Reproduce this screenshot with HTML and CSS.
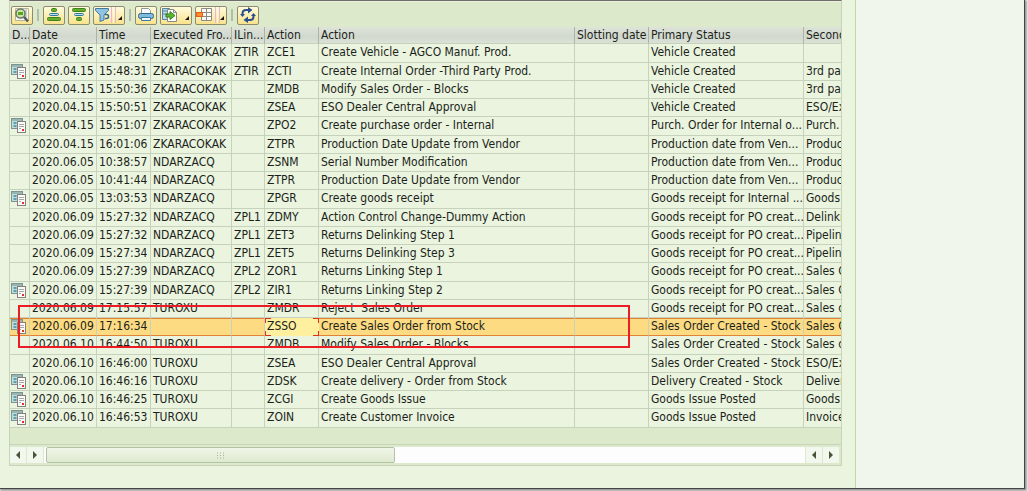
FILE: index.html
```html
<!DOCTYPE html>
<html lang="en">
<head>
<meta charset="utf-8">
<title>Vehicle action history</title>
<link rel="stylesheet" href="styles.css">
</head>
<body>
<svg class="defs" aria-hidden="true">
  <symbol id="doc" viewBox="0 0 16 15">
    <rect x=".5" y=".5" width="11" height="10" fill="#c3dcd6" stroke="#7d9490"/>
    <path d="M1 2h10" stroke="#6e8f8f"/>
    <path d="M2.500 4h3v2h-3zM2.500 7h3v2h-3z" fill="#5aa0b4"/>
    <rect x="6.500" y="3.500" width="8" height="11" fill="#fafafa" stroke="#85807c"/>
    <path d="M8 6.500h5M8 8.500h5M8 10.500h2" stroke="#a7a7a7"/>
    <path d="M11 11h2v2h-2z" fill="#e5301f"/>
  </symbol>
</svg>
<div class="window">
  <main class="main">
    <section class="grid">
      <div class="toolbar" role="toolbar" aria-label="Table functions">
        <button class="tool" type="button" aria-label="Details"><svg width="20" height="16" viewBox="0 0 20 16"><path d="M3.500 1.500h13v12h-13z" fill="#f7f8ef" stroke="#b4b5a0"/><path d="M14 2v11" stroke="#aaa"/><circle cx="8.500" cy="6.500" r="4.500" fill="#c9e8a4" stroke="#6b766c" stroke-width="1.500"/><path d="M6 6.500h5" stroke="#56a51c" stroke-width="3"/><path d="M12 10l4 4.500" stroke="#555c58" stroke-width="2.500"/></svg></button>
        <span class="sep"></span>
        <button class="tool" type="button" aria-label="Sort ascending"><svg width="16" height="16" viewBox="0 0 16 16"><rect x="5.500" y="1.500" width="5" height="3" rx="1" fill="#65ad2c" stroke="#3e821f"/><rect x="3.500" y="6.500" width="9" height="2" rx="1" fill="#b8dff0" stroke="#30759d"/><rect x="1.500" y="10.500" width="13" height="3" rx="1" fill="#65ad2c" stroke="#3e821f"/></svg></button>
        <button class="tool" type="button" aria-label="Sort descending"><svg width="16" height="16" viewBox="0 0 16 16"><rect x="1.500" y="1.500" width="13" height="3" rx="1" fill="#65ad2c" stroke="#3e821f"/><rect x="3.500" y="6.500" width="9" height="2" rx="1" fill="#b8dff0" stroke="#30759d"/><rect x="5.500" y="10.500" width="5" height="3" rx="1" fill="#65ad2c" stroke="#3e821f"/></svg></button>
        <button class="tool split" type="button" aria-label="Filter"><svg width="30" height="16" viewBox="0 0 30 16"><path d="M1.500 1.500h13v2L10 8v5l-4 1.500V8L1.500 3.500z" fill="#8fc3df" stroke="#407ca2"/><path d="M11 7.500h1.500a2 2 0 0 1 0 4H11" fill="none" stroke="#2f6797" stroke-width="1.500"/><path d="M17.500 0v16M21.500 0v16" stroke="#e6b6d8"/><path d="M19.500 0v16" stroke="#fff8dc"/><path d="M28 9v4h-4z" fill="#171717"/></svg></button>
        <span class="sep"></span>
        <button class="tool" type="button" aria-label="Print"><svg width="18" height="16" viewBox="0 0 18 16"><path d="M4.500 6V1.500h7l2 2V6" fill="#fff" stroke="#8b98a0"/><rect x="1.500" y="6.500" width="15" height="5" rx="2" fill="#81bbdc" stroke="#286995"/><path d="M4.500 10.500h9v3h-9z" fill="#eefaff" stroke="#387aa5"/></svg></button>
        <button class="tool split" type="button" aria-label="Export"><svg width="30" height="16" viewBox="0 0 30 16"><path d="M1.500 1.500h7v11h-7z" fill="#badae6" stroke="#52869c"/><path d="M2 4h6M2 7h4" stroke="#4685a1"/><path d="M6.500 2.500h6l3 3v9h-9z" fill="#fff" stroke="#878787"/><path d="M12.500 2.500v3h3" fill="none" stroke="#878787"/><path d="M5 7h4V4.500l5 4-5 4V10H5z" fill="#5bb62c" stroke="#397f22"/><path d="M28 9v4h-4z" fill="#171717"/></svg></button>
        <button class="tool split" type="button" aria-label="Choose layout"><svg width="30" height="16" viewBox="0 0 30 16"><path d="M5.500 1.500h10v12h-10zM5.500 5.500h10M5.500 9.500h10M10.500 1.500v12" fill="#faf9f2" stroke="#8b8a84"/><rect x=".5" y="5.500" width="6" height="4" fill="#ff8b2c" stroke="#de5f16"/><path d="M19.500 0v16M23.500 0v16" stroke="#e6b6d8"/><path d="M21.500 0v16" stroke="#fff8dc"/><path d="M28 9v4h-4z" fill="#171717"/></svg></button>
        <span class="sep"></span>
        <button class="tool" type="button" aria-label="Refresh"><svg width="18" height="16" viewBox="0 0 18 16"><path d="M3.500 8V6.500Q3.500 3 7 3H10M14.500 8v1.500Q14.500 13 11 13H8" fill="none" stroke="#294f8c" stroke-width="2"/><path d="M9 0l4.500 3L9 6.500zM9 9.500L4.500 13 9 16zM1 7h5l-2.500 3zM12 9h5l-2.500-3z" fill="#294f8c"/></svg></button>
      </div>
      <div class="scroller">
        <table>
          <colgroup><col class="c-doc"><col class="c-date"><col class="c-time"><col class="c-exec"><col class="c-link"><col class="c-act"><col class="c-text"><col class="c-slot"><col class="c-stat"><col class="c-sec"></colgroup>
          <thead><tr><th>D...</th><th>Date</th><th>Time</th><th>Executed Fro...</th><th>ILin...</th><th>Action</th><th>Action</th><th>Slotting date</th><th>Primary Status</th><th>Second</th></tr></thead>
          <tbody>
            <tr><td></td><td>2020.04.15</td><td>15:48:27</td><td>ZKARACOKAK</td><td>ZTIR</td><td>ZCE1</td><td>Create Vehicle - AGCO Manuf. Prod.</td><td></td><td>Vehicle Created</td><td></td></tr>
            <tr><td><svg class="doc"><use href="#doc"/></svg></td><td>2020.04.15</td><td>15:48:31</td><td>ZKARACOKAK</td><td>ZTIR</td><td>ZCTI</td><td>Create Internal Order -Third Party Prod.</td><td></td><td>Vehicle Created</td><td>3rd par</td></tr>
            <tr><td></td><td>2020.04.15</td><td>15:50:36</td><td>ZKARACOKAK</td><td></td><td>ZMDB</td><td>Modify Sales Order - Blocks</td><td></td><td>Vehicle Created</td><td>3rd par</td></tr>
            <tr><td></td><td>2020.04.15</td><td>15:50:51</td><td>ZKARACOKAK</td><td></td><td>ZSEA</td><td>ESO Dealer Central Approval</td><td></td><td>Vehicle Created</td><td>ESO/Ex</td></tr>
            <tr><td><svg class="doc"><use href="#doc"/></svg></td><td>2020.04.15</td><td>15:51:07</td><td>ZKARACOKAK</td><td></td><td>ZPO2</td><td>Create purchase order - Internal</td><td></td><td>Purch. Order for Internal o...</td><td>Purch.</td></tr>
            <tr><td></td><td>2020.04.15</td><td>16:01:06</td><td>ZKARACOKAK</td><td></td><td>ZTPR</td><td>Production Date Update from Vendor</td><td></td><td>Production date from Ven...</td><td>Produc</td></tr>
            <tr><td></td><td>2020.06.05</td><td>10:38:57</td><td>NDARZACQ</td><td></td><td>ZSNM</td><td>Serial Number Modification</td><td></td><td>Production date from Ven...</td><td>Produc</td></tr>
            <tr><td></td><td>2020.06.05</td><td>10:41:44</td><td>NDARZACQ</td><td></td><td>ZTPR</td><td>Production Date Update from Vendor</td><td></td><td>Production date from Ven...</td><td>Produc</td></tr>
            <tr><td><svg class="doc"><use href="#doc"/></svg></td><td>2020.06.05</td><td>13:03:53</td><td>NDARZACQ</td><td></td><td>ZPGR</td><td>Create goods receipt</td><td></td><td>Goods receipt for Internal ...</td><td>Goods</td></tr>
            <tr><td></td><td>2020.06.09</td><td>15:27:32</td><td>NDARZACQ</td><td>ZPL1</td><td>ZDMY</td><td>Action Control Change-Dummy Action</td><td></td><td>Goods receipt for PO creat...</td><td>Delinki</td></tr>
            <tr><td></td><td>2020.06.09</td><td>15:27:32</td><td>NDARZACQ</td><td>ZPL1</td><td>ZET3</td><td>Returns Delinking Step 1</td><td></td><td>Goods receipt for PO creat...</td><td>Pipeline</td></tr>
            <tr><td></td><td>2020.06.09</td><td>15:27:34</td><td>NDARZACQ</td><td>ZPL1</td><td>ZET5</td><td>Returns Delinking Step 3</td><td></td><td>Goods receipt for PO creat...</td><td>Pipeline</td></tr>
            <tr><td></td><td>2020.06.09</td><td>15:27:39</td><td>NDARZACQ</td><td>ZPL2</td><td>ZOR1</td><td>Returns Linking Step 1</td><td></td><td>Goods receipt for PO creat...</td><td>Sales O</td></tr>
            <tr><td><svg class="doc"><use href="#doc"/></svg></td><td>2020.06.09</td><td>15:27:39</td><td>NDARZACQ</td><td>ZPL2</td><td>ZIR1</td><td>Returns Linking Step 2</td><td></td><td>Goods receipt for PO creat...</td><td>Sales O</td></tr>
            <tr><td></td><td>2020.06.09</td><td>17:15:57</td><td>TUROXU</td><td></td><td>ZMDR</td><td>Reject&nbsp; Sales Order</td><td></td><td>Goods receipt for PO creat...</td><td>Sales o</td></tr>
            <tr class="selected"><td><svg class="doc"><use href="#doc"/></svg></td><td>2020.06.09</td><td>17:16:34</td><td></td><td></td><td class="focus">ZSSO</td><td>Create Sales Order from Stock</td><td></td><td>Sales Order Created - Stock</td><td>Sales O</td></tr>
            <tr><td></td><td>2020.06.10</td><td>16:44:50</td><td>TUROXU</td><td></td><td>ZMDB</td><td>Modify Sales Order - Blocks</td><td></td><td>Sales Order Created - Stock</td><td>Sales o</td></tr>
            <tr><td></td><td>2020.06.10</td><td>16:46:00</td><td>TUROXU</td><td></td><td>ZSEA</td><td>ESO Dealer Central Approval</td><td></td><td>Sales Order Created - Stock</td><td>ESO/Ex</td></tr>
            <tr><td><svg class="doc"><use href="#doc"/></svg></td><td>2020.06.10</td><td>16:46:16</td><td>TUROXU</td><td></td><td>ZDSK</td><td>Create delivery - Order from Stock</td><td></td><td>Delivery Created - Stock</td><td>Deliver</td></tr>
            <tr><td><svg class="doc"><use href="#doc"/></svg></td><td>2020.06.10</td><td>16:46:25</td><td>TUROXU</td><td></td><td>ZCGI</td><td>Create Goods Issue</td><td></td><td>Goods Issue Posted</td><td>Goods</td></tr>
            <tr><td><svg class="doc"><use href="#doc"/></svg></td><td>2020.06.10</td><td>16:46:53</td><td>TUROXU</td><td></td><td>ZOIN</td><td>Create Customer Invoice</td><td></td><td>Goods Issue Posted</td><td>Invoice</td></tr>
          </tbody>
        </table>
        <div class="marker"></div>
      </div>
      <div class="filler"></div>
      <div class="scrollbar">
        <button class="arrow" type="button" aria-label="Scroll to start"><svg width="6" height="8" viewBox="0 0 6 8"><path d="M5 0v8L1 4z"/></svg></button>
        <button class="arrow" type="button" aria-label="Scroll right"><svg width="6" height="8" viewBox="0 0 6 8"><path d="M1 0v8l4-4z"/></svg></button>
        <div class="track"><div class="thumb"><svg width="9" height="7" viewBox="0 0 9 7"><path d="M1 1h1M4 1h1M7 1h1M1 3.500h1M4 3.500h1M7 3.500h1M1 6h1M4 6h1M7 6h1" stroke="#a4b394"/></svg></div></div>
        <button class="arrow" type="button" aria-label="Scroll left"><svg width="6" height="8" viewBox="0 0 6 8"><path d="M5 0v8L1 4z"/></svg></button>
        <button class="arrow" type="button" aria-label="Scroll to end"><svg width="6" height="8" viewBox="0 0 6 8"><path d="M1 0v8l4-4z"/></svg></button>
      </div>
    </section>
  </main>
  <aside class="side"></aside>
</div>
</body>
</html>
```

FILE: styles.css
```css
* { box-sizing: border-box; }
body {
  margin: 0;
  min-height: 100vh;
  padding: 0 3px 3px 0;
  display: flex;
  background: #fff;
  color: #1c1f1a;
  font: 12px/16px "DejaVu Sans Condensed", "Noto Sans", sans-serif;
}
.defs { position: absolute; width: 0; height: 0; }
.window {
  flex: 1;
  display: flex;
  border-right: 1px solid #444;
  border-bottom: 1px solid #444;
  box-shadow: 1px 1px 2px 1px #999;
}
.main {
  flex: 1;
  min-width: 0;
  padding: 0 13px 22px 9px;
  background: #eaf4df;
}
.side {
  width: 169px;
  background: #f0f6ec;
  border-left: 1px solid #bfd8a8;
}
.grid {
  border: 1px solid #c7d4b9;
  border-top: 1px solid #716d6d;
  background: #dce9cb;
}
.toolbar {
  display: flex;
  align-items: center;
  height: 26px;
  padding: 1px 1px 0;
  gap: 3px;
  border-top: 1px solid #e7f0dc;
}
.tool {
  display: flex;
  align-items: center;
  justify-content: center;
  width: 22px;
  height: 19px;
  padding: 0;
  border: 1px solid #8e8b72;
  border-radius: 2px;
  background: linear-gradient(#fffbdc, #f9e28d);
}
.tool.split { width: 32px; }
.sep {
  width: 2px;
  height: 12px;
  margin: 0 1px;
  background: #b3bda8;
}
.scroller { position: relative; overflow: hidden; }
table {
  width: 100%;
  table-layout: fixed;
  border-collapse: separate;
  border-spacing: 0;
  background: #eaf4df;
}
.c-doc { width: 20px; }
.c-date { width: 67px; }
.c-time { width: 54px; }
.c-exec { width: 81px; }
.c-link { width: 33px; }
.c-act { width: 54px; }
.c-slot { width: 74px; }
.c-stat { width: 155px; }
.c-sec { width: 37px; }
th, td {
  padding: 0 0 0 2px;
  border-right: 1px solid #c6d2bb;
  border-bottom: 1px solid #c6d2bb;
  font-weight: 400;
  text-align: left;
  vertical-align: top;
  white-space: nowrap;
  overflow: hidden;
}
th:last-child, td:last-child { border-right: 0; }
th {
  height: 17px;
  border-right-color: #aab3a4;
  background: linear-gradient(#dee3da, #d1d8cd 60%, #dbe1d6);
}
td { height: 18px; }
tr:nth-child(4n+1) td { height: 19px; }
td:first-child { padding-left: 1px; }
.doc { display: block; width: 16px; height: 15px; margin-top: 1px; }
.selected td {
  background: #fddb83;
  border-bottom-color: #df8436;
  box-shadow: inset 0 1px #df8436;
}
/* Cell cursor: red brackets in the four corners */
.selected .focus {
  --c: linear-gradient(#e0302c, #e0302c);
  border-color: transparent;
  background:
    var(--c) 0 0 / 6px 1px, var(--c) 100% 0 / 6px 1px,
    var(--c) 0 100% / 6px 1px, var(--c) 100% 100% / 6px 1px,
    var(--c) 0 0 / 1px 5px, var(--c) 100% 0 / 1px 5px,
    var(--c) 0 100% / 1px 5px, var(--c) 100% 100% / 1px 5px,
    #fff0a0;
  background-repeat: no-repeat;
  background-origin: border-box;
  box-shadow: none;
}
.marker {
  position: absolute;
  left: 8px;
  right: 211px;
  top: 278px;
  height: 43px;
  border: 2px solid #ec1c24;
}
.filler { height: 16px; }
.scrollbar {
  display: flex;
  gap: 1px;
  height: 21px;
  padding: 2px 2px 2px 0;
  border-top: 1px solid #c7d4b9;
}
.arrow {
  display: flex;
  align-items: center;
  justify-content: center;
  width: 16px;
  padding: 0;
  border: 0;
  background: #f3f8ee;
}
.arrow path { fill: #45563a; }
.track { flex: 1; padding-left: 2px; background: #fdfdfd; }
.thumb {
  display: flex;
  align-items: center;
  justify-content: center;
  width: 46%;
  height: 100%;
  border: 1px solid #b4c2a8;
  border-radius: 2px;
  background: linear-gradient(#f0f6e8, #dfead1);
}
```
